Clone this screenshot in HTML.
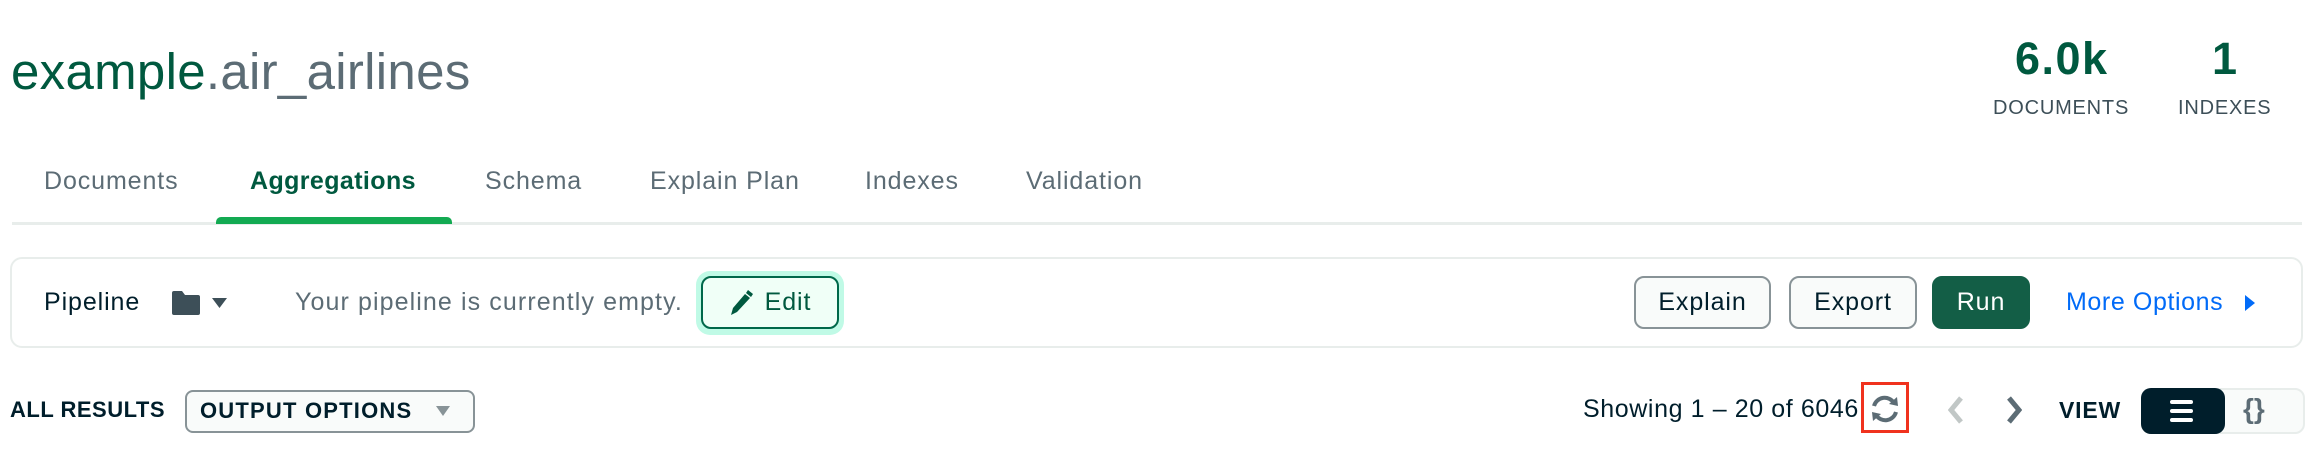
<!DOCTYPE html>
<html><head><style>
*{margin:0;padding:0;box-sizing:border-box}
body{width:2318px;height:472px;background:#fff;font-family:"Liberation Sans",sans-serif;position:relative;overflow:hidden}
.a{position:absolute;white-space:nowrap}
.title{left:11px;top:42px;font-size:51px;color:#5C6C75;letter-spacing:0.3px}
.title b{color:#00593F;font-weight:normal}
.num{font-size:45px;color:#00593F;font-weight:bold;top:33px;letter-spacing:1.5px}
.lbl{font-size:20px;color:#3D4F58;top:97px;letter-spacing:0.8px}
.tab{top:167px;font-size:25px;color:#5C6C75;letter-spacing:0.9px}
.btn{position:absolute;top:276px;height:53px;border:2px solid #889397;border-radius:10px;background:#F9FBFA;font-size:25px;letter-spacing:0.9px;color:#001E2B;display:flex;align-items:center;justify-content:center}
.t{font-size:25px;letter-spacing:0.9px}
</style></head><body>
<div class="a title"><b>example</b>.air_airlines</div>
<div class="a num" style="left:2015px">6.0k</div>
<div class="a num" style="left:2212px">1</div>
<div class="a lbl" style="left:1993px">DOCUMENTS</div>
<div class="a lbl" style="left:2178px">INDEXES</div>

<div class="a tab" style="left:44px">Documents</div>
<div class="a tab" style="left:250px;color:#00593F;font-weight:bold;letter-spacing:0.4px">Aggregations</div>
<div class="a tab" style="left:485px">Schema</div>
<div class="a tab" style="left:650px">Explain Plan</div>
<div class="a tab" style="left:865px">Indexes</div>
<div class="a tab" style="left:1026px">Validation</div>
<div class="a" style="left:12px;top:222px;width:2290px;height:3px;background:#E8EDEB"></div>
<div class="a" style="left:216px;top:217px;width:236px;height:7px;background:#13AA52;border-radius:5px 5px 0 0"></div>

<div class="a" style="left:10px;top:257px;width:2293px;height:91px;border:2px solid #E8EDEB;border-radius:12px"></div>
<div class="a t" style="left:44px;top:288px;color:#001E2B">Pipeline</div>
<svg class="a" style="left:172px;top:291px" width="28" height="24" viewBox="0 0 28 24"><path d="M0 2Q0 0 2 0H10L13 4H26Q28 4 28 6V22Q28 24 26 24H2Q0 24 0 22Z" fill="#3D4F58"/></svg>
<svg class="a" style="left:212px;top:298px" width="15" height="10"><path d="M0 0H15L7.5 10Z" fill="#3D4F58"/></svg>
<div class="a t" style="left:295px;top:288px;color:#5C6C75;letter-spacing:1.1px">Your pipeline is currently empty.</div>
<div class="a" style="left:696px;top:271px;width:148px;height:64px;border-radius:14px;background:#C0FAE6"></div>
<div class="btn" style="left:701px;width:138px;border-color:#00684A;background:#F0FFF7;color:#00593F">
<svg width="24" height="26" viewBox="0 0 24 26" style="margin-right:12px"><path d="M2 25L4 18L16 4L21 8L8 22Z" fill="#00593F"/><path d="M17 3L19 0L24 4L22 7Z" fill="#00593F"/></svg>Edit</div>
<div class="btn" style="left:1634px;width:137px">Explain</div>
<div class="btn" style="left:1789px;width:128px">Export</div>
<div class="btn" style="left:1932px;width:98px;background:#135E46;border-color:#135E46;color:#fff">Run</div>
<div class="a t" style="left:2066px;top:288px;color:#016BF8;letter-spacing:0.6px">More Options</div>
<svg class="a" style="left:2245px;top:295px" width="10" height="16"><path d="M0 0L10 8L0 16Z" fill="#016BF8"/></svg>

<div class="a" style="left:10px;top:397px;font-size:22px;font-weight:bold;color:#001E2B;letter-spacing:0.5px">ALL RESULTS</div>
<div class="a" style="left:185px;top:390px;width:290px;height:43px;border:2px solid #889397;border-radius:8px;background:#F9FBFA"></div>
<div class="a" style="left:200px;top:398px;font-size:22px;font-weight:bold;color:#001E2B;letter-spacing:1.2px">OUTPUT OPTIONS</div>
<svg class="a" style="left:436px;top:406px" width="14" height="10"><path d="M0 0H14L7 10Z" fill="#889397"/></svg>

<div class="a t" style="left:1583px;top:395px;color:#001E2B;letter-spacing:0.6px">Showing 1 – 20 of 6046</div>
<div class="a" style="left:1861px;top:382px;width:48px;height:51px;border:3px solid #F0321E"></div>
<svg class="a" style="left:1869px;top:394px" width="32" height="30" viewBox="0 0 32 30"><path d="M5 12A11 11 0 0 1 25 9" fill="none" stroke="#5C6C75" stroke-width="4"/><path d="M20 10L29 12L28 3Z" fill="#5C6C75"/><path d="M27 18A11 11 0 0 1 7 21" fill="none" stroke="#5C6C75" stroke-width="4"/><path d="M12 20L3 18L4 27Z" fill="#5C6C75"/></svg>
<svg class="a" style="left:1948px;top:396px" width="16" height="28"><path d="M13 2L3 14L13 26" fill="none" stroke="#C1C7C6" stroke-width="5"/></svg>
<svg class="a" style="left:2006px;top:396px" width="16" height="28"><path d="M3 2L13 14L3 26" fill="none" stroke="#5C6C75" stroke-width="5"/></svg>
<div class="a" style="left:2059px;top:397px;font-size:23px;font-weight:bold;color:#001E2B;letter-spacing:0.8px">VIEW</div>
<div class="a" style="left:2141px;top:388px;width:164px;height:46px;border:2px solid #E8EDEB;border-radius:10px;background:#F9FBFA"></div>
<div class="a" style="left:2141px;top:388px;width:84px;height:46px;border-radius:10px;background:#001E2B"></div>
<div class="a" style="left:2170px;top:400px;width:23px;height:4px;background:#fff;border-radius:2px"></div>
<div class="a" style="left:2170px;top:409px;width:23px;height:4px;background:#fff;border-radius:2px"></div>
<div class="a" style="left:2170px;top:418px;width:23px;height:4px;background:#fff;border-radius:2px"></div>
<div class="a" style="left:2243px;top:393px;font-size:28px;font-weight:bold;color:#5C6C75">{}</div>
</body></html>
